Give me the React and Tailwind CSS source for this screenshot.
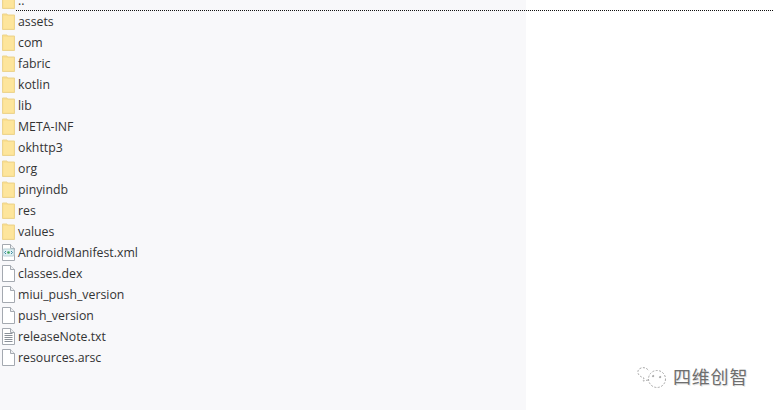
const rows = [
  ["assets", "folder"], ["com", "folder"], ["fabric", "folder"], ["kotlin", "folder"], ["lib", "folder"],
  ["META-INF", "folder"], ["okhttp3", "folder"], ["org", "folder"], ["pinyindb", "folder"], ["res", "folder"], ["values", "folder"],
  ["AndroidManifest.xml", "xml"], ["classes.dex", "file"], ["miui_push_version", "file"], ["push_version", "file"],
  ["releaseNote.txt", "txt"], ["resources.arsc", "file"],
];

function Folder() {
  return (
    <svg width="14" height="17" viewBox="0 0 14 17" className="shrink-0">
      <path d="M0.5 1 L5 1 L5.5 2 L12.5 2 L12.5 16.5 L0.5 16.5 Z" fill="#fbdf8e" stroke="#ecd48f" strokeWidth="1" />
      <rect x="1.5" y="3" width="10" height="12.5" fill="#fde59c" />
    </svg>
  );
}

function Doc({ kind }) {
  return (
    <svg width="14" height="17" viewBox="0 0 14 17" className="shrink-0">
      <path d="M0.5 0.5 L8.5 0.5 L12.5 4.5 L12.5 16.5 L0.5 16.5 Z" fill="#ffffff" stroke="#a4a9b0" strokeWidth="1" />
      <path d="M8.5 0.5 L8.5 4.5 L12.5 4.5" fill="#eef0f2" stroke="#a4a9b0" strokeWidth="1" />
      {kind === "txt" && (
        <path d="M2.5 5.5 H10.5 M2.5 7.5 H10.5 M2.5 9.5 H10.5 M2.5 11.5 H10.5 M2.5 13.5 H10.5" stroke="#8a9098" strokeWidth="1" />
      )}
      {kind === "xml" && (
        <>
          <rect x="1" y="5" width="11" height="7" rx="1" fill="#dfeff2" stroke="#b9d0d6" strokeWidth="1" />
          <path d="M4 7 L2.5 8.5 L4 10 M9 7 L10.5 8.5 L9 10" stroke="#3a8aa0" strokeWidth="1" fill="none" />
          <circle cx="6.5" cy="8.5" r="1.3" fill="#3fa35a" />
        </>
      )}
    </svg>
  );
}

function Row({ name, type }) {
  return (
    <div className="flex h-[21px] items-center pl-[2px]">
      {type === "folder" ? <Folder /> : <Doc kind={type} />}
      <span className="ml-[2px] text-[12.3px] leading-[21px] text-[#333333]">{name}</span>
    </div>
  );
}

export default function App() {
  return (
    <div
      className="relative flex h-[410px] w-[773px] overflow-hidden bg-white"
      style={{ fontFamily: '"Open Sans", "Noto Sans", "Noto Sans CJK SC", sans-serif' }}
    >
      <div className="h-full w-[526px] shrink-0 bg-[#f8f8fa]">
        <div className="flex h-[11px] flex-col justify-end overflow-hidden pl-[2px]">
          <div className="flex h-[21px] shrink-0 items-center">
            <Folder />
            <span className="ml-[2px] text-[12.3px] leading-[21px] text-[#333333]">..</span>
          </div>
        </div>
        <div>
          {rows.map(([n, t]) => (
            <Row key={n} name={n} type={t} />
          ))}
        </div>
      </div>
      <div className="absolute left-[16px] right-0 top-[10px] border-t border-dotted border-[#111]" />
      <div className="absolute left-[636px] top-[365px] flex items-center gap-[5px]">
        <svg width="32" height="24" viewBox="0 0 32 24" fill="none" stroke="#a8a8a8" strokeWidth="1" strokeDasharray="2 1.5">
          <path d="M12 15 L7 16 L8 13 C1 11 0 5 5 3 C8 2 11 3 13 6" />
          <circle cx="21" cy="14" r="8.5" />
          <circle cx="17" cy="11" r="0.8" fill="#888" />
          <circle cx="24" cy="12" r="0.8" fill="#888" />
        </svg>
        <span className="text-[18px] leading-[24px] tracking-[0.8px] text-[#6e6e6e] [text-shadow:1px_1px_0_#e4e4e4]">四维创智</span>
      </div>
    </div>
  );
}
